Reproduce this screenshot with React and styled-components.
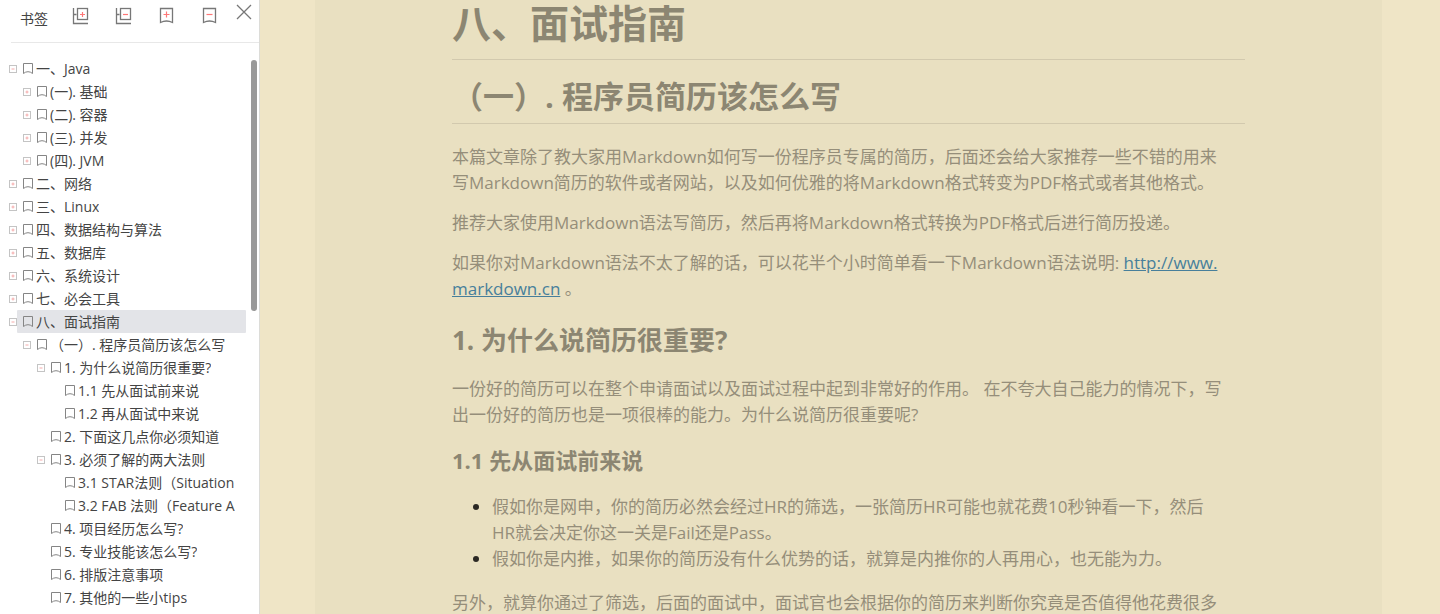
import styled, { createGlobalStyle } from "styled-components";
import { useState } from "react";

const GlobalStyle = createGlobalStyle`
  * {
    box-sizing: border-box;
  }
  body {
    margin: 0;
    font-family: "Open Sans", "Noto Sans CJK SC", sans-serif;
  }
  button {
    display: block;
    padding: 0;
    border: none;
    background: none;
    cursor: pointer;
  }
  svg {
    display: block;
  }
`;

const Layout = styled.div`
  display: flex;
  height: 100vh;
  overflow: hidden;
  background-color: #efe5c6;
`;

const Sidebar = styled.aside`
  display: flex;
  flex-direction: column;
  flex: none;
  width: 260px;
  background-color: #fff;
  border-right: 1px solid #dcdcd8;
  color: #444;
  font-size: 14px;
`;

const SidebarHead = styled.header`
  display: flex;
  align-items: flex-start;
  height: 43px;
  margin-left: 11px;
  padding: 7px 7px 0 9px;
  border-bottom: 1px solid #e8e8e8;
`;

const SidebarTitle = styled.h2`
  margin: 0;
  font-size: 14px;
  font-weight: 400;
  line-height: 24px;
`;

const Tools = styled.div`
  display: flex;
  gap: 25px;
  margin-left: 24px;
`;

const ToolButton = styled.button`
  width: 18px;
  height: 18px;
`;

const CloseButton = styled.button`
  width: 16px;
  height: 16px;
  margin: -3px 0 0 auto;
`;

const TreeArea = styled.div`
  display: flex;
  flex: 1;
  min-height: 0;
  padding: 14px 2px 0 9px;
`;

const Tree = styled.ul`
  flex: 1;
  min-width: 0;
  margin: 0;
  padding: 0;
  overflow: hidden;
  list-style: none;
`;

const Row = styled.li`
  display: flex;
  align-items: center;
  height: 23px;
  padding-left: ${(props) => props.$level * 14}px;
`;

const Toggle = styled.button`
  flex: none;
  width: 8px;
  height: 8px;
`;

const Spacer = styled.span`
  flex: none;
  width: 8px;
`;

const BookmarkLink = styled.a`
  display: flex;
  align-items: center;
  flex: 1;
  gap: 3px;
  min-width: 0;
  height: 23px;
  padding: 0 8px 0 6px;
  border-radius: 1px;
  background-color: ${(props) => (props.$active ? "#e3e4e8" : "transparent")};
  color: #444;
  text-decoration: none;
  svg {
    flex: none;
  }
  span {
    overflow: hidden;
    line-height: 23px;
    white-space: nowrap;
  }
`;

const ScrollThumb = styled.div`
  flex: none;
  width: 6px;
  height: 251px;
  margin: 3px 0 0 5px;
  border-radius: 3px;
  background-color: #999;
`;

const Viewer = styled.main`
  flex: 1;
  min-width: 0;
  padding: 0 58px 0 55px;
  overflow: hidden;
`;

const Page = styled.article`
  min-height: 100%;
  padding: 0 137px;
  background-color: #e9e0c1;
  color: #958e7a;
  font-size: 17px;
  line-height: 26px;
  white-space: nowrap;
  h1,
  h2,
  h3,
  h4 {
    margin: 0;
    color: #8c8672;
    font-weight: 700;
  }
  h1 {
    padding-bottom: 13px;
    border-bottom: 1px solid #d2c9ae;
    font-size: 39px;
    line-height: 46px;
  }
  h2 {
    margin: 17px 0 20px;
    padding-bottom: 8px;
    border-bottom: 1px solid #d2c9ae;
    font-size: 31px;
    line-height: 38px;
  }
  h3 {
    margin: 21px 0 19px;
    font-size: 26px;
    line-height: 34px;
  }
  h4 {
    margin: 18px 0 20px;
    font-size: 22px;
    line-height: 28px;
  }
  p {
    margin: 0 0 14px;
  }
  ul {
    margin: 0 0 18px;
    padding-left: 40px;
  }
  li::marker {
    color: #2b2924;
  }
  p a {
    color: #477f9b;
    text-decoration: underline;
  }
`;

const TreeIcon = ({ plus }) => (
  <svg width="18" height="18" viewBox="0 0 18 18" fill="none">
    <g stroke="#777" strokeWidth="1.3">
      <path d="M1.5 1v15.5H16M1.5 7.5h3" />
      <rect x="5.5" y="1.5" width="10" height="11" />
    </g>
    <path
      d={plus ? "M8 7.5h5M10.5 5v5" : "M8 7.5h5"}
      stroke="#ff7777"
      strokeWidth="1.2"
    />
  </svg>
);

const FlagIcon = ({ plus }) => (
  <svg width="18" height="18" viewBox="0 0 18 18" fill="none">
    <path
      d="M2.5 1.5h12v14q-3-1.5-6-1.5t-6 1.5z"
      stroke="#777"
      strokeWidth="1.3"
    />
    <path
      d={plus ? "M5.5 7.5h6M8.5 4.5v6" : "M5.5 7.5h6"}
      stroke="#ff7777"
      strokeWidth="1.2"
    />
  </svg>
);

const BookmarkIcon = () => (
  <svg width="10" height="13" viewBox="0 0 10 13" fill="none">
    <path d="M.5 1.5h9v10Q7.500 9.700 5 9.700T.5 11.500z" stroke="#858585" />
  </svg>
);

const ToggleIcon = ({ open }) => (
  <svg width="8" height="8" viewBox="0 0 8 8" fill="none">
    <rect x=".5" y=".5" width="7" height="7" stroke="#c4c4c4" />
    <path d={open ? "M2.5 4h3" : "M2.5 4h3M4 2.5v3"} stroke="#f5aaaa" />
  </svg>
);

// open: true / false for a branch, left out for a leaf
const bookmarks = [
  { level: 0, title: "一、Java", open: true },
  { level: 1, title: "(一). 基础", open: false },
  { level: 1, title: "(二). 容器", open: false },
  { level: 1, title: "(三). 并发", open: false },
  { level: 1, title: "(四). JVM", open: false },
  { level: 0, title: "二、网络", open: false },
  { level: 0, title: "三、Linux", open: false },
  { level: 0, title: "四、数据结构与算法", open: false },
  { level: 0, title: "五、数据库", open: false },
  { level: 0, title: "六、系统设计", open: false },
  { level: 0, title: "七、必会工具", open: false },
  { level: 0, title: "八、面试指南", open: true },
  { level: 1, title: "（一）. 程序员简历该怎么写", open: true },
  { level: 2, title: "1. 为什么说简历很重要?", open: true },
  { level: 3, title: "1.1 先从面试前来说" },
  { level: 3, title: "1.2 再从面试中来说" },
  { level: 2, title: "2. 下面这几点你必须知道" },
  { level: 2, title: "3. 必须了解的两大法则", open: true },
  { level: 3, title: "3.1 STAR法则（Situation" },
  { level: 3, title: "3.2 FAB 法则（Feature A" },
  { level: 2, title: "4. 项目经历怎么写?" },
  { level: 2, title: "5. 专业技能该怎么写?" },
  { level: 2, title: "6. 排版注意事项" },
  { level: 2, title: "7. 其他的一些小tips" },
];

function App() {
  const [active, setActive] = useState(11);

  return (
    <>
      <GlobalStyle />
      <Layout>
        {/* bookmarks */}
        <Sidebar>
          <SidebarHead>
            <SidebarTitle>书签</SidebarTitle>
            <Tools>
              <ToolButton aria-label="展开全部">
                <TreeIcon plus />
              </ToolButton>
              <ToolButton aria-label="折叠全部">
                <TreeIcon />
              </ToolButton>
              <ToolButton aria-label="添加书签">
                <FlagIcon plus />
              </ToolButton>
              <ToolButton aria-label="删除书签">
                <FlagIcon />
              </ToolButton>
            </Tools>
            <CloseButton aria-label="关闭">
              <svg width="16" height="16" viewBox="0 0 16 16">
                <path d="M1 1l14 14M15 1L1 15" stroke="#777" strokeWidth="1.3" />
              </svg>
            </CloseButton>
          </SidebarHead>
          <TreeArea>
            <Tree>
              {bookmarks.map((item, index) => (
                <Row key={item.title} $level={item.level}>
                  {item.open === undefined ? (
                    <Spacer />
                  ) : (
                    <Toggle aria-label={item.title} aria-expanded={item.open}>
                      <ToggleIcon open={item.open} />
                    </Toggle>
                  )}
                  <BookmarkLink
                    href="#"
                    $active={index === active}
                    onClick={() => setActive(index)}
                  >
                    <BookmarkIcon />
                    <span>{item.title}</span>
                  </BookmarkLink>
                </Row>
              ))}
            </Tree>
            <ScrollThumb />
          </TreeArea>
        </Sidebar>
        {/* document */}
        <Viewer>
          <Page>
            <h1>八、面试指南</h1>
            <h2>（一）. 程序员简历该怎么写</h2>
            <p>
              本篇文章除了教大家用Markdown如何写一份程序员专属的简历，后面还会给大家推荐一些不错的用来
              <br />
              写Markdown简历的软件或者网站，以及如何优雅的将Markdown格式转变为PDF格式或者其他格式。
            </p>
            <p>
              推荐大家使用Markdown语法写简历，然后再将Markdown格式转换为PDF格式后进行简历投递。
            </p>
            <p>
              如果你对Markdown语法不太了解的话，可以花半个小时简单看一下Markdown语法说明:{" "}
              <a href="http://www.markdown.cn">
                http://www.
                <br />
                markdown.cn
              </a>{" "}
              。
            </p>
            <h3>1. 为什么说简历很重要?</h3>
            <p>
              一份好的简历可以在整个申请面试以及面试过程中起到非常好的作用。
              在不夸大自己能力的情况下，写
              <br />
              出一份好的简历也是一项很棒的能力。为什么说简历很重要呢?
            </p>
            <h4>1.1 先从面试前来说</h4>
            <ul>
              <li>
                假如你是网申，你的简历必然会经过HR的筛选，一张简历HR可能也就花费10秒钟看一下，然后
                <br />
                HR就会决定你这一关是Fail还是Pass。
              </li>
              <li>
                假如你是内推，如果你的简历没有什么优势的话，就算是内推你的人再用心，也无能为力。
              </li>
            </ul>
            <p>
              另外，就算你通过了筛选，后面的面试中，面试官也会根据你的简历来判断你究竟是否值得他花费很多
            </p>
          </Page>
        </Viewer>
      </Layout>
    </>
  );
}

export default App;
